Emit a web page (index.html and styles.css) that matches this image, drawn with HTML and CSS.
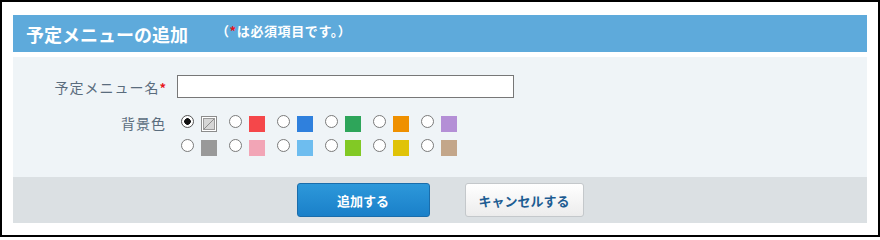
FILE: index.html
```html
<!DOCTYPE html>
<html lang="ja">
<head>
<meta charset="utf-8">
<title>予定メニューの追加</title>
<link rel="stylesheet" href="styles.css">
</head>
<body>
<div class="dialog">
  <div class="head">
    <h1 class="title">予定メニューの追加</h1>
    <span class="note">（<span class="req">*</span>は必須項目です。）</span>
  </div>
  <div class="form">
    <div class="row">
      <label class="lbl" for="name">予定メニュー名<span class="req">*</span></label>
      <input id="name" class="text" type="text">
    </div>
    <div class="row colors">
      <div class="lbl">背景色</div>
      <div class="grid">
        <label class="item"><input class="radio" type="radio" name="c" checked><span class="sw none"><svg width="16" height="16" viewBox="0 0 16 16"><rect x="0.5" y="0.5" width="15" height="15" fill="#fff" stroke="#8c8c8c"/><rect x="2.5" y="2.5" width="11" height="11" fill="#d6d6d6" stroke="#9a9a9a"/><line x1="3" y1="13" x2="13" y2="3" stroke="#8c8c8c" stroke-width="1"/></svg></span></label>
        <label class="item"><input class="radio" type="radio" name="c"><span class="sw red"></span></label>
        <label class="item"><input class="radio" type="radio" name="c"><span class="sw blue"></span></label>
        <label class="item"><input class="radio" type="radio" name="c"><span class="sw green"></span></label>
        <label class="item"><input class="radio" type="radio" name="c"><span class="sw orange"></span></label>
        <label class="item"><input class="radio" type="radio" name="c"><span class="sw purple"></span></label>
        <label class="item"><input class="radio" type="radio" name="c"><span class="sw gray"></span></label>
        <label class="item"><input class="radio" type="radio" name="c"><span class="sw pink"></span></label>
        <label class="item"><input class="radio" type="radio" name="c"><span class="sw sky"></span></label>
        <label class="item"><input class="radio" type="radio" name="c"><span class="sw lime"></span></label>
        <label class="item"><input class="radio" type="radio" name="c"><span class="sw yellow"></span></label>
        <label class="item"><input class="radio" type="radio" name="c"><span class="sw tan"></span></label>
      </div>
    </div>
  </div>
  <div class="foot">
    <button class="btn primary" type="button">追加する</button>
    <button class="btn secondary" type="button">キャンセルする</button>
  </div>
</div>
</body>
</html>
```

FILE: styles.css
```css
* { box-sizing: border-box; }
html, body { margin: 0; padding: 0; }
body {
  width: 880px;
  height: 237px;
  border: 2px solid #000;
  background: #fff;
  padding: 13px 11px 12px 11px;
  font-family: "Noto Sans CJK JP", "Noto Sans", sans-serif;
}
.dialog { display: flex; flex-direction: column; }
.head {
  height: 37px;
  background: #5eaadb;
  display: flex;
  align-items: center;
  padding-left: 13px;
  color: #fff;
}
.title {
  margin: 0;
  font-size: 18px;
  font-weight: bold;
  line-height: 1;
}
.note {
  margin-left: 28px;
  font-size: 13px;
  font-weight: bold;
  letter-spacing: 0.6px;
  line-height: 1;
  position: relative;
  top: -3px;
}
.req { color: #e8141e; font-weight: bold; }
.lbl .req { font-size: 13px; letter-spacing: 0; }
.form {
  margin-top: 5px;
  height: 120px;
  background: #eff4f7;
  padding-top: 18px;
}
.row { display: flex; align-items: center; }
.lbl {
  width: 153px;
  text-align: right;
  font-size: 14px;
  letter-spacing: 1px;
  color: #5a6c7d;
  line-height: 1;
}
.text {
  margin: 0 0 0 11px;
  width: 337px;
  height: 23px;
  border: 1px solid #777;
  border-radius: 0;
  background: #fff;
  padding: 0 4px;
  font: inherit;
  font-size: 13px;
}
.colors { margin-top: 17px; align-items: flex-start; }
.colors .lbl { padding-top: 1px; }
.grid {
  margin-left: 11px;
  display: grid;
  grid-template-columns: repeat(6, 48px);
  row-gap: 7px;
}
.item { display: flex; align-items: flex-start; height: 17px; }
.radio {
  appearance: none;
  -webkit-appearance: none;
  margin: 0 7px 0 4px;
  width: 13px;
  height: 13px;
  border-radius: 50%;
  border: 1px solid #7a7a7a;
  background: #fff;
  flex: none;
}
.radio:checked {
  background: radial-gradient(circle, #111 0, #111 3px, #fff 3.6px);
  border-color: #555;
}
.sw { display: block; width: 16px; height: 16px; margin-top: 1px; flex: none; }
.sw svg { display: block; }
.red { background: #f5474a; }
.blue { background: #2f80dd; }
.green { background: #2ea55a; }
.orange { background: #ef9000; }
.purple { background: #b48fd6; }
.gray { background: #999999; }
.pink { background: #f2a5b6; }
.sky { background: #6ebdef; }
.lime { background: #82c925; }
.yellow { background: #e0c308; }
.tan { background: #c3a68a; }
.foot {
  height: 46px;
  background: #dbe0e3;
  display: flex;
  justify-content: center;
  align-items: center;
  gap: 35px;
}
.btn {
  height: 34px;
  border-radius: 3px;
  font-family: inherit;
  font-size: 13px;
  font-weight: bold;
  padding: 0;
  cursor: pointer;
}
.primary {
  width: 133px;
  color: #fff;
  border: 1px solid #1a6dab;
  background: linear-gradient(#2d98da, #1a80c9);
}
.secondary {
  width: 119px;
  color: #1d5c92;
  border: 1px solid #c4c8cb;
  background: linear-gradient(#ffffff, #ececec);
}
```
